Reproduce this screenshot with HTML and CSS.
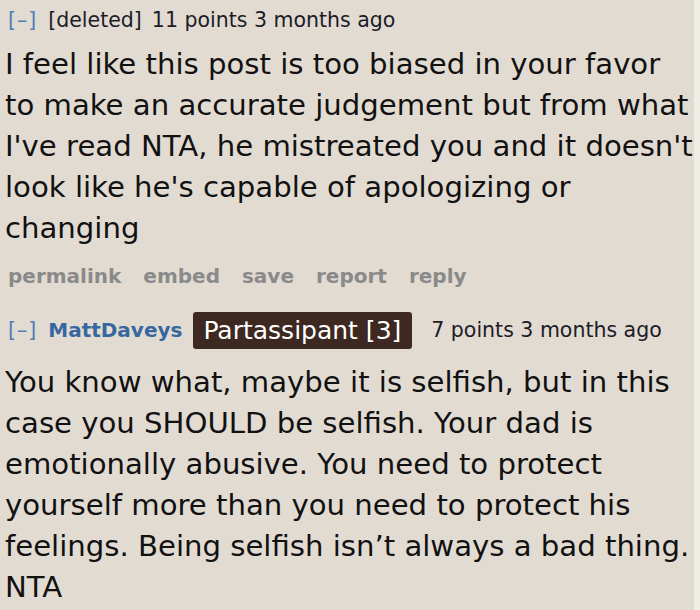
FILE: index.html
```html
<!DOCTYPE html>
<html lang="en">
<head>
<meta charset="utf-8">
<title>Comments</title>
<link rel="stylesheet" href="styles.css">
</head>
<body>
<div class="page">
  <div class="comment">
    <p class="tagline">
      <a class="expand">[–]</a>
      <span class="author deleted">[deleted]</span>
      <span class="score">11 points 3 months ago</span>
    </p>
    <div class="md">I feel like this post is too biased in your favor to make an accurate judgement but from what I've read NTA, he mistreated you and it doesn't look like he's capable of apologizing or changing</div>
    <ul class="buttons">
      <li>permalink</li>
      <li>embed</li>
      <li>save</li>
      <li>report</li>
      <li>reply</li>
    </ul>
  </div>
  <div class="comment second">
    <p class="tagline">
      <a class="expand">[–]</a>
      <span class="author">MattDaveys</span>
      <span class="flair">Partassipant [3]</span>
      <span class="score">7 points 3 months ago</span>
    </p>
    <div class="md">You know what, maybe it is selfish, but in this case you SHOULD be selfish. Your dad is emotionally abusive. You need to protect yourself more than you need to protect his feelings. Being selfish isn’t always a bad thing. NTA</div>
  </div>
</div>
</body>
</html>
```
FILE: styles.css
```css
html, body {
  margin: 0;
  padding: 0;
  background: #f0ece6;
}
body {
  font-family: "DejaVu Sans", Verdana, sans-serif;
  color: #111;
}
.page {
  width: 689px;
  height: 610px;
  padding: 6px 0 0 5px;
  box-sizing: content-box;
  background: #e2dbd2;
  overflow: hidden;
}
.tagline {
  margin: 0;
  padding-left: 3px;
  display: flex;
  align-items: center;
  font-size: 20.5px;
  line-height: 28px;
  color: #1c1c28;
  white-space: nowrap;
}
.expand {
  color: #4f7fb8;
  letter-spacing: 1px;
  margin-right: 11px;
}
.author {
  margin-right: 10px;
}
.author:not(.deleted) {
  font-weight: bold;
  font-size: 20px;
  color: #36679f;
  margin-right: 11px;
}
.flair {
  background: #3d2922;
  color: #fff;
  font-size: 25px;
  line-height: 37px;
  padding: 0 11px 0 10px;
  border-radius: 3px;
  margin-right: 19px;
}
.md {
  margin-top: 10px;
  margin-right: -4px;
  font-size: 29.15px;
  line-height: 41px;
  color: #111;
}
.buttons {
  list-style: none;
  margin: 13px 0 0;
  padding: 0 0 0 3px;
  display: flex;
  gap: 22px;
  font-size: 20px;
  font-weight: bold;
  line-height: 28px;
  color: #8a8a8a;
}
.second {
  margin-top: 20px;
}
.second .tagline {
  line-height: 40px;
}
.second .md {
  margin-top: 12px;
}
```
